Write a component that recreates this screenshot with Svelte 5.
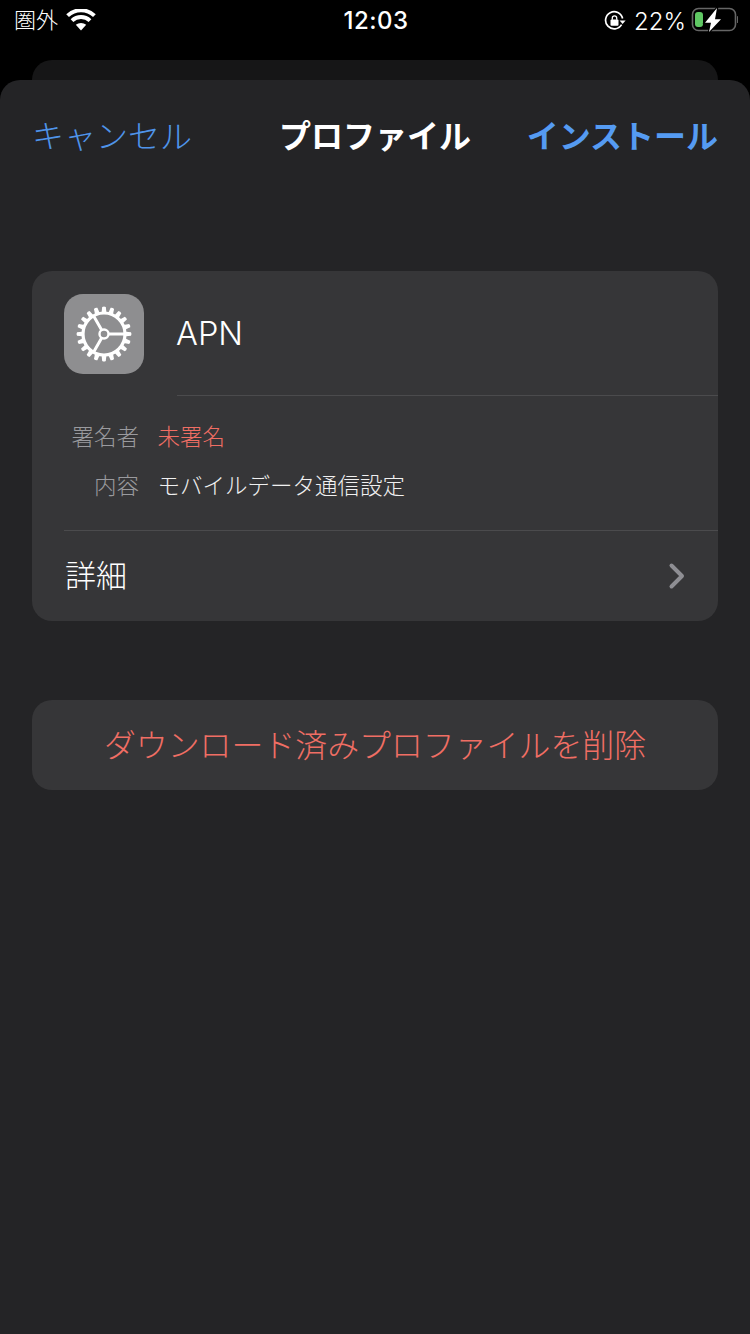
<script>
  const teeth = Array.from({ length: 20 }, (_, i) => i * 18);
</script>

<div class="screen">
  <div class="status">
    <div class="status-left">
      <span class="carrier">圏外</span>
      <svg class="wifi" width="30" height="22" viewBox="0 0 30 22">
        <path d="M15 21.500 9.800 15.800a8 8 0 0 1 10.400 0Z" fill="#fff" />
        <path d="M6 11.600a13.200 13.200 0 0 1 18 0" fill="none" stroke="#fff" stroke-width="4" />
        <path d="M1.600 6.600a19.600 19.600 0 0 1 26.800 0" fill="none" stroke="#fff" stroke-width="4" />
      </svg>
    </div>
    <div class="clock">12:03</div>
    <div class="status-right">
      <svg class="lock" width="22" height="22" viewBox="0 0 22 22">
        <path d="M17.600 14.600A8.600 8.600 0 1 1 18.600 8.500" fill="none" stroke="#fff" stroke-width="1.700" />
        <path d="M15.600 10.600h6l-3 3.400Z" fill="#fff" />
        <rect x="6.500" y="9.600" width="8" height="6.200" rx="1" fill="#fff" />
        <path d="M8.300 9.800V8a2.200 2.200 0 0 1 4.400 0v1.800" fill="none" stroke="#fff" stroke-width="1.300" />
      </svg>
      <span class="percent">22%</span>
      <svg class="battery" width="48" height="34" viewBox="0 0 48 34">
        <rect x="2.500" y="8.500" width="43" height="22" rx="6" fill="none" stroke="#666" stroke-width="1.600" />
        <path d="M47 16v7a3.600 3.600 0 0 0 0-7Z" fill="#666" />
        <rect x="5" y="12" width="8" height="15" rx="3" fill="#5fc763" />
        <path class="bolt" d="M27 8 15 22.800H21L19 32 31 19.300H25Z" />
      </svg>
    </div>
  </div>

  <div class="peek"></div>

  <div class="sheet">
    <nav class="nav">
      <span class="cancel">キャンセル</span>
      <span class="title">プロファイル</span>
      <span class="install">インストール</span>
    </nav>

    <section class="card">
      <div class="head">
        <div class="app-icon">
          <svg width="80" height="80" viewBox="0 0 80 80">
            {#each teeth as deg}
              <path d="M37.400 20 38.200 13Q40 12 41.800 13L42.600 20Z" fill="#fff" transform="rotate({deg} 40 40)" />
            {/each}
            <circle cx="40" cy="40" r="21" fill="none" stroke="#fff" stroke-width="3.200" />
            <path d="M45 40H61M37.500 44.300 29.500 58.200M37.500 35.700 29.500 21.800" fill="none" stroke="#fff" stroke-width="3" />
            <circle cx="40" cy="40" r="4.500" fill="none" stroke="#fff" stroke-width="2.400" />
          </svg>
        </div>
        <div class="name">APN</div>
      </div>

      <div class="info">
        <div class="row">
          <span class="label">署名者</span>
          <span class="value red">未署名</span>
        </div>
        <div class="row">
          <span class="label">内容</span>
          <span class="value">モバイルデータ通信設定</span>
        </div>
      </div>

      <div class="more">
        <span>詳細</span>
        <svg width="18" height="28" viewBox="0 0 18 28">
          <path d="M3.500 3.500 14 14 3.500 24.500" fill="none" stroke="#8e8e93" stroke-width="4" stroke-linecap="round" stroke-linejoin="round" />
        </svg>
      </div>
    </section>

    <div class="remove">ダウンロード済みプロファイルを削除</div>
  </div>
</div>

<style>
  :global(body) {
    margin: 0;
    background: #000;
  }

  .screen {
    width: 750px;
    height: 1334px;
    overflow: hidden;
    background: #000;
    color: #fff;
    font-family: Inter, "Noto Sans CJK JP", sans-serif;
  }

  .status {
    height: 60px;
    box-sizing: border-box;
    padding: 2px 12px 0 14px;
    display: grid;
    grid-template-columns: 1fr auto 1fr;
    align-items: start;
  }
  .status-left {
    display: flex;
    align-items: flex-start;
    gap: 9px;
    height: 38px;
  }
  .carrier {
    font-size: 22px;
    font-weight: 300;
    line-height: 36px;
  }
  .wifi {
    margin-top: 7px;
    margin-left: -1px;
  }
  .clock {
    font-size: 24px;
    font-weight: 500;
    line-height: 38px;
    letter-spacing: 0.5px;
  }
  .status-right {
    display: flex;
    align-items: center;
    justify-content: flex-end;
    height: 38px;
  }
  .lock {
    margin-right: 8px;
    margin-top: -1px;
  }
  .percent {
    font-size: 24px;
    font-weight: 300;
    margin-right: 4px;
  }
  .battery {
    align-self: flex-start;
    margin-top: -2px;
  }
  .bolt {
    fill: #fff;
    stroke: #000;
    stroke-width: 2.4px;
    paint-order: stroke;
  }

  .peek {
    height: 20px;
    margin: 0 32px;
    background: #161617;
    border-radius: 20px 20px 0 0;
  }

  .sheet {
    height: 1254px;
    background: #242426;
    border-radius: 20px 20px 0 0;
    padding: 0 32px;
    box-sizing: border-box;
  }

  .nav {
    height: 191px;
    box-sizing: border-box;
    padding-top: 33px;
    display: grid;
    grid-template-columns: 1fr auto 1fr;
    align-items: start;
    font-size: 32px;
    line-height: 48px;
  }
  .cancel {
    color: #4f94ea;
    font-weight: 300;
  }
  .title {
    font-weight: 700;
  }
  .install {
    color: #559bf2;
    font-weight: 700;
    text-align: right;
  }

  .card {
    height: 350px;
    background: #363638;
    border-radius: 20px;
    overflow: hidden;
    padding-left: 32px;
    display: flex;
    flex-direction: column;
  }
  .head {
    height: 125px;
    display: flex;
    align-items: flex-start;
    padding-top: 23px;
    box-sizing: border-box;
    position: relative;
  }
  .head::after {
    content: "";
    position: absolute;
    left: 113px;
    right: 0;
    bottom: 0;
    height: 1px;
    background: #4b4b4d;
  }
  .app-icon {
    width: 80px;
    height: 80px;
    border-radius: 19px;
    background: #8e8e90;
  }
  .name {
    margin-left: 32px;
    font-size: 32.5px;
    font-weight: 300;
    line-height: 80px;
  }

  .info {
    height: 135px;
    box-sizing: border-box;
    padding-top: 14px;
    border-bottom: 1px solid #4b4b4d;
  }
  .row {
    display: flex;
    gap: 18.5px;
    height: 49px;
    align-items: center;
    font-size: 22.5px;
    font-weight: 300;
  }
  .label {
    width: 75px;
    text-align: right;
    white-space: nowrap;
    color: #9a9a9e;
  }
  .value {
    color: #f0f0f0;
  }
  .red {
    color: #f06e64;
  }

  .more {
    flex: 1;
    display: flex;
    align-items: center;
    justify-content: space-between;
    padding: 0 32px 0 1px;
    font-size: 31px;
    font-weight: 300;
    line-height: 40px;
  }

  .remove {
    margin-top: 79px;
    height: 90px;
    border-radius: 20px;
    background: #363638;
    color: #f06e64;
    font-size: 31.9px;
    font-weight: 300;
    line-height: 92px;
    text-align: center;
  }
</style>
